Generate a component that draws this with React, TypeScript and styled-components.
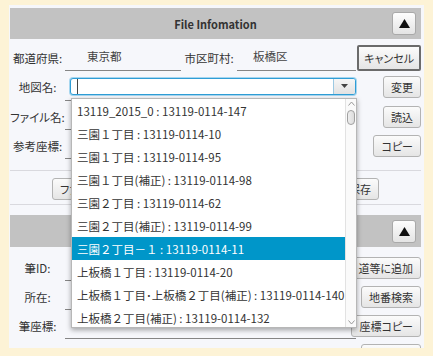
import React from "react";
import styled, { createGlobalStyle } from "styled-components";

const GlobalStyle = createGlobalStyle`
  html, body {
    margin: 0;
    padding: 0;
    background: #fdf3d6;
  }
  body {
    font-family: "Noto Sans CJK JP", "Noto Sans", sans-serif;
    font-size: 11.5px;
    color: #333;
    font-feature-settings: "palt";
  }
`;

const Frame = styled.div`
  width: 433px;
  height: 356px;
  box-sizing: border-box;
  padding: 5px 9px 0 9px;
  overflow: hidden;
`;

const Panel = styled.div`
  position: relative;
  height: 343px;
  box-sizing: border-box;
  padding: 3px 3px 0 1px;
  background: #f6f7fb;
  overflow: hidden;
`;

const Header = styled.div<{ $h: number }>`
  height: ${p => p.$h}px;
  background: #c2c2c2;
  display: grid;
  grid-template-columns: 1fr auto 1fr;
  align-items: center;
`;

const Title = styled.div`
  grid-column: 2;
  font-size: 11px;
  font-weight: bold;
  color: #333;
`;

const CollapseButton = styled.div`
  grid-column: 3;
  justify-self: end;
  margin-right: 5px;
  width: 24px;
  height: 23px;
  box-sizing: border-box;
  border: 1px solid #a9a9a9;
  border-radius: 3px;
  background: linear-gradient(#fdfdfd, #e4e4e4);
  display: flex;
  align-items: center;
  justify-content: center;
`;

const Form = styled.div<{ $top: number; $bottom: number; $line?: boolean }>`
  padding: ${p => p.$top}px 0 ${p => p.$bottom}px 0;
  border-bottom: ${p => (p.$line ? "1px solid #d9d9de" : "none")};
`;

const Row = styled.div<{ $h: number }>`
  height: ${p => p.$h}px;
  display: flex;
  align-items: stretch;
`;

const Label = styled.div<{ $w?: number }>`
  width: ${p => p.$w ?? 55}px;
  flex: 0 0 auto;
  display: flex;
  align-items: center;
  justify-content: center;
  padding-top: 2px;
  box-sizing: border-box;
  color: #333;
  white-space: nowrap;
`;

const Field = styled.div<{ $w?: number; $indent?: number }>`
  ${p => (p.$w ? `width: ${p.$w}px; flex: 0 0 auto;` : "flex: 1 1 auto;")}
  display: flex;
  align-items: center;
  box-sizing: border-box;
  padding-left: ${p => p.$indent ?? 0}px;
  border-bottom: 1px solid #858585;
  color: #444;
`;

const ButtonCell = styled.div`
  width: 65px;
  flex: 0 0 auto;
  display: flex;
  align-items: center;
  justify-content: flex-end;
  padding-top: 2px;
  box-sizing: border-box;
`;

const Button = styled.div<{ $default?: boolean }>`
  height: ${p => (p.$default ? 26 : 22)}px;
  box-sizing: border-box;
  padding: 0 ${p => (p.$default ? 5 : 7)}px;
  display: flex;
  align-items: center;
  white-space: nowrap;
  font-size: 11px;
  color: #333;
  border: ${p => (p.$default ? "2px solid #6b6b6b" : "1px solid #b3b3b3")};
  border-radius: ${p => (p.$default ? 2 : 3)}px;
  background: linear-gradient(#fbfbfb, #e5e5e5);
`;

const Combo = styled.div`
  flex: 1 1 auto;
  margin: 4px 0 3px 5px;
  display: flex;
  border: 1px solid #2f9dd6;
  box-shadow: 0 0 0 1px #a6d6ef;
  border-radius: 3px;
  background: #fff;
  overflow: hidden;
`;

const ComboInput = styled.div`
  flex: 1 1 auto;
  display: flex;
  align-items: center;
  padding-left: 6px;
`;

const Caret = styled.span`
  width: 1px;
  height: 15px;
  background: #444;
`;

const ComboArrow = styled.div`
  width: 21px;
  border-left: 1px solid #9cc9e2;
  background: linear-gradient(#f6f6f6, #e2e2e2);
  display: flex;
  align-items: center;
  justify-content: center;
`;

const ActionRow = styled.div`
  height: 22px;
  padding: 7px 42px 4px 42px;
  display: flex;
  justify-content: space-between;
  border-bottom: 1px solid #d9d9de;
`;

const Section = styled.div`
  margin-top: 10px;
`;

const Popup = styled.div`
  position: absolute;
  left: 62px;
  top: 93px;
  width: 286px;
  height: 230px;
  box-sizing: border-box;
  border: 1px solid #b7b7b7;
  background: #fff;
  box-shadow: 0 2px 5px rgba(0, 0, 0, 0.35);
  display: flex;
  z-index: 5;
`;

const List = styled.div`
  flex: 1 1 auto;
  overflow: hidden;
`;

const Item = styled.div<{ $active?: boolean }>`
  height: 23px;
  display: flex;
  align-items: center;
  padding-left: 5px;
  white-space: nowrap;
  font-size: 11.5px;
  font-feature-settings: normal;
  color: ${p => (p.$active ? "#fff" : "#333")};
  background: ${p => (p.$active ? "#0096c9" : "transparent")};
`;

const ScrollBar = styled.div`
  width: 10px;
  flex: 0 0 auto;
  border-left: 1px solid #e2e2e2;
  background: #fafafa;
  display: flex;
  flex-direction: column;
  align-items: center;
`;

const Thumb = styled.div`
  width: 8px;
  height: 15px;
  margin-top: 2px;
  box-sizing: border-box;
  border: 1px solid #a0a0a0;
  border-radius: 4px;
  background: linear-gradient(90deg, #eee, #dcdcdc);
`;

const Spacer = styled.div`
  flex: 1 1 auto;
`;

const ArrowSlot = styled.div`
  height: 9px;
  display: flex;
  align-items: center;
`;

function TriangleUp() {
  return (
    <svg width="11" height="9" viewBox="0 0 11 9">
      <polygon points="5.5,0 11,9 0,9" fill="#111" />
    </svg>
  );
}

function Chevron({ up }: { up?: boolean }) {
  return (
    <svg width="7" height="5" viewBox="0 0 7 5">
      <polyline
        points={up ? "0.5,4.5 3.5,1 6.5,4.5" : "0.5,0.5 3.5,4 6.5,0.5"}
        fill="none"
        stroke="#9a9a9a"
        strokeWidth="1"
      />
    </svg>
  );
}

const items = [
  "13119_2015_0 : 13119-0114-147",
  "三園１丁目 : 13119-0114-10",
  "三園１丁目 : 13119-0114-95",
  "三園１丁目(補正) : 13119-0114-98",
  "三園２丁目 : 13119-0114-62",
  "三園２丁目(補正) : 13119-0114-99",
  "三園２丁目－１ : 13119-0114-11",
  "上板橋１丁目 : 13119-0114-20",
  "上板橋１丁目･上板橋２丁目(補正) : 13119-0114-140",
  "上板橋２丁目(補正) : 13119-0114-132",
];
const selected = 6;

const lowerRows = [
  { label: "筆ID:", button: "道等に追加" },
  { label: "所在:", button: "地番検索" },
  { label: "筆座標:", button: "座標コピー" },
  { label: "位置表示:", button: "位置検索" },
];

export default function App() {
  return (
    <>
      <GlobalStyle />
      <Frame>
        <Panel>
          <Header $h={31}>
            <Title>File Infomation</Title>
            <CollapseButton>
              <TriangleUp />
            </CollapseButton>
          </Header>

          <Form $top={3} $bottom={11} $line>
            <Row $h={29}>
              <Label>都道府県:</Label>
              <Field $w={116} $indent={22}>東京都</Field>
              <Label $w={56}>市区町村:</Label>
              <Field $indent={16}>板橋区</Field>
              <ButtonCell>
                <Button $default>キャンセル</Button>
              </ButtonCell>
            </Row>
            <Row $h={30}>
              <Label>地図名:</Label>
              <Field>
                <Combo>
                  <ComboInput>
                    <Caret />
                  </ComboInput>
                  <ComboArrow>
                    <svg width="7" height="4" viewBox="0 0 7 4">
                      <polygon points="0,0 7,0 3.5,4" fill="#444" />
                    </svg>
                  </ComboArrow>
                </Combo>
              </Field>
              <ButtonCell>
                <Button>変更</Button>
              </ButtonCell>
            </Row>
            <Row $h={29}>
              <Label>ファイル名:</Label>
              <Field />
              <ButtonCell>
                <Button>読込</Button>
              </ButtonCell>
            </Row>
            <Row $h={29}>
              <Label>参考座標:</Label>
              <Field />
              <ButtonCell>
                <Button>コピー</Button>
              </ButtonCell>
            </Row>
          </Form>

          <ActionRow>
            <Button>ファイル選択</Button>
            <Button>地図読込</Button>
            <Button>ファイル保存</Button>
          </ActionRow>

          <Section>
            <Header $h={32}>
              <CollapseButton>
                <TriangleUp />
              </CollapseButton>
            </Header>
            <Form $top={5} $bottom={0}>
              {lowerRows.map(r => (
                <Row $h={29} key={r.label}>
                  <Label>{r.label}</Label>
                  <Field />
                  <ButtonCell>
                    <Button>{r.button}</Button>
                  </ButtonCell>
                </Row>
              ))}
            </Form>
          </Section>

          <Popup>
            <List>
              {items.map((text, i) => (
                <Item key={text} $active={i === selected}>
                  {text}
                </Item>
              ))}
            </List>
            <ScrollBar>
              <ArrowSlot>
                <Chevron up />
              </ArrowSlot>
              <Thumb />
              <Spacer />
              <ArrowSlot>
                <Chevron />
              </ArrowSlot>
            </ScrollBar>
          </Popup>
        </Panel>
      </Frame>
    </>
  );
}
